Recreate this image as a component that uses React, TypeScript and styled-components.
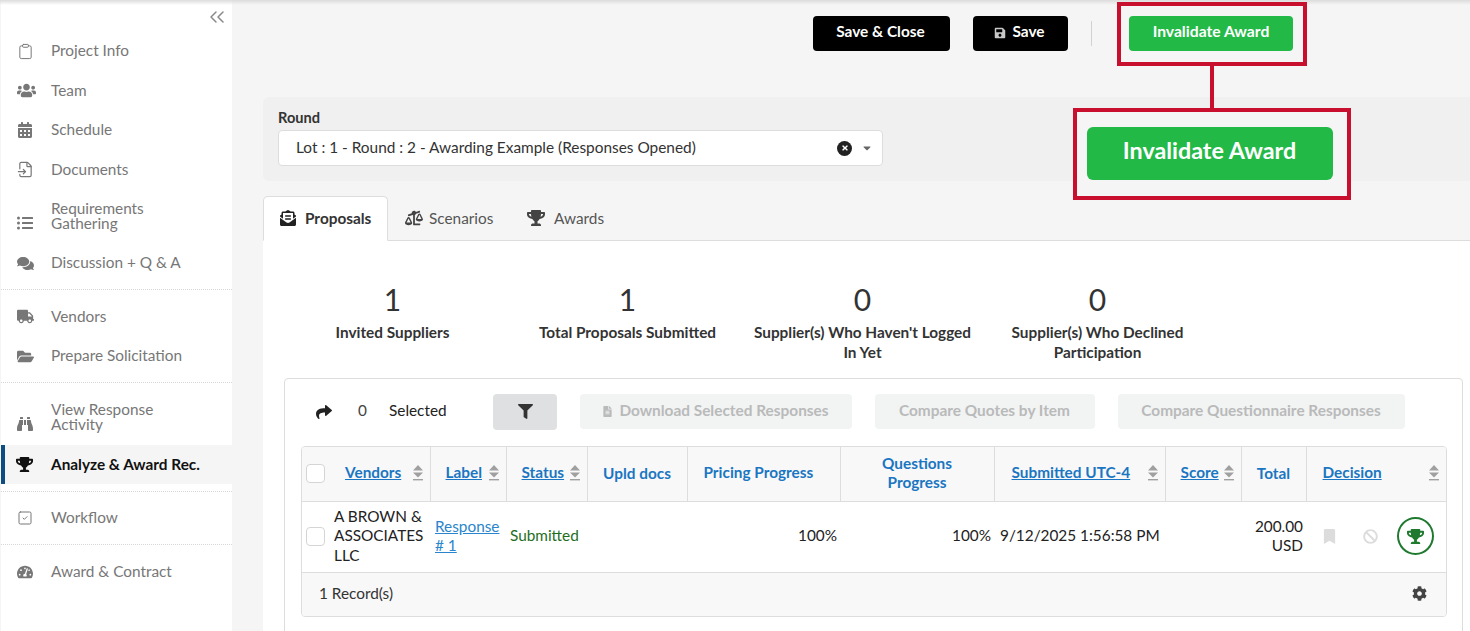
import React from "react";
import styled, { createGlobalStyle } from "styled-components";
import {
  FaUsers, FaCalendarAlt, FaListUl, FaComments, FaTruck, FaFolderOpen,
  FaBinoculars, FaTrophy, FaTachometerAlt, FaSave, FaFilter, FaShare, FaBookmark,
  FaBan, FaCog, FaBalanceScaleLeft, FaEnvelopeOpenText, FaFileAlt, FaCaretDown, FaTimes,
} from "react-icons/fa";
import { ChevronsLeft, FileInput, SquareCheck, Clipboard } from "lucide-react";

const Global = createGlobalStyle`
  html, body { margin: 0; padding: 0; height: 631px; overflow: hidden; background: #f5f5f5; }
  * { box-sizing: border-box; }
  body { font-family: Lato, "Liberation Sans", sans-serif; font-size: 15.35px; color: #222; }
`;

const Page = styled.div`
  position: relative;
  display: flex;
  width: 1470px;
  height: 631px;
  overflow: hidden;
  &::before {
    content: "";
    position: absolute;
    top: 0; left: 0; right: 0;
    height: 5px;
    background: linear-gradient(#dcdcdc, rgba(245, 245, 245, 0));
    z-index: 2;
  }
`;

const Sidebar = styled.nav`
  width: 231px;
  margin-left: 1px;
  flex: none;
  background: #fff;
  padding-top: 31.3px;
  position: relative;
`;

const Collapse = styled.span`
  position: absolute;
  top: 5px;
  right: 3px;
  color: #8a8a8a;
  display: flex;
`;

const Group = styled.div<{ $last?: boolean }>`
  padding-bottom: 6.5px;
  margin-bottom: 6.5px;
  border-bottom: ${p => (p.$last ? "none" : "1px dotted #d8d8d8")};
`;

const Item = styled.div<{ $active?: boolean; $h?: number }>`
  display: flex;
  align-items: center;
  height: ${p => p.$h ?? 39.5}px;
  padding-left: ${p => (p.$active ? "11px" : "16px")};
  border-left: ${p => (p.$active ? "4px solid #0f4c81" : "none")};
  background: ${p => (p.$active ? "#f5f5f5" : "transparent")};
  color: ${p => (p.$active ? "#111" : "#777")};
  font-weight: ${p => (p.$active ? 700 : 400)};
  line-height: 15.6px;
  svg { margin-top: ${p => (p.$h ? "13px" : "0")}; }
`;

const ItemIcon = styled.span<{ $active?: boolean }>`
  width: ${p => (p.$active ? "35px" : "34px")};
  flex: none;
  display: flex;
  font-size: 17px;
`;

const Main = styled.main`
  flex: 1;
  min-width: 0;
  padding-left: 31px;
  display: flex;
  flex-direction: column;
`;

const TopBar = styled.div`
  height: 97px;
  flex: none;
  display: flex;
  align-items: flex-start;
  padding: 16px 177px 0 0;
  justify-content: flex-end;
`;

const DarkButton = styled.button<{ $w: number }>`
  width: ${p => p.$w}px;
  height: 35px;
  margin-right: 23px;
  border: 0;
  border-radius: 4px;
  background: #000;
  color: #fff;
  font: 700 15.4px Lato, sans-serif;
  display: flex;
  align-items: center;
  justify-content: center;
  gap: 6px;
  padding: 0 2px 5px 0;
  svg { color: #c8c8c8; font-size: 12px; margin-top: 3px; }
`;

const Separator = styled.span`
  width: 1px;
  height: 25px;
  margin: 5px 37px 0 0;
  background: #d2d2d2;
`;

const GreenButton = styled.button<{ $big?: boolean }>`
  width: ${p => (p.$big ? "246px" : "164px")};
  height: ${p => (p.$big ? "53px" : "35px")};
  border: 0;
  border-radius: ${p => (p.$big ? "6px" : "4px")};
  background: #22b947;
  color: #fff;
  padding: 0 0 ${p => (p.$big ? "7px" : "5px")};
  font: 700 ${p => (p.$big ? "23.3px" : "15.7px")} Lato, sans-serif;
`;

const RoundPanel = styled.section`
  height: 84px;
  flex: none;
  background: #f0f0f0;
  border-radius: 6px 0 0 6px;
  padding: 12px 15px;
`;

const RoundLabel = styled.div`
  font-weight: 700;
  font-size: 14.6px;
  color: #333;
  line-height: 18px;
  margin: 0 0 3px;
`;

const SelectBox = styled.div`
  width: 605px;
  height: 36px;
  background: #fff;
  border: 1px solid #ddd;
  border-radius: 4px;
  display: flex;
  align-items: center;
  padding: 0 9px 0 17px;
  font-size: 15.4px;
  color: #333;
`;

const SelectText = styled.span`
  flex: 1;
  padding-bottom: 3px;
`;

const ClearDot = styled.span`
  width: 15px;
  height: 15px;
  border-radius: 50%;
  background: #222;
  color: #fff;
  font-size: 8px;
  display: flex;
  align-items: center;
  justify-content: center;
  margin-right: 9px;
`;

const Caret = styled.span`
  display: flex;
  color: #666;
  font-size: 12px;
`;

const Tabs = styled.div`
  display: flex;
  margin-top: 15px;
  height: 45px;
  flex: none;
  border-bottom: 1px solid #ddd;
`;

const Tab = styled.div<{ $active?: boolean; $w: number; $gap: number }>`
  width: ${p => p.$w}px;
  height: 45px;
  display: flex;
  align-items: center;
  gap: ${p => p.$gap}px;
  padding-left: ${p => (p.$active ? "16px" : "17px")};
  padding-bottom: 2px;
  background: ${p => (p.$active ? "#fff" : "transparent")};
  border: ${p => (p.$active ? "1px solid #ddd" : "none")};
  border-bottom: ${p => (p.$active ? "1px solid #fff" : "none")};
  border-radius: 5px 5px 0 0;
  font-weight: ${p => (p.$active ? 700 : 400)};
  color: ${p => (p.$active ? "#333" : "#555")};
  svg { font-size: ${p => (p.$active ? "16px" : "18px")}; color: ${p => (p.$active ? "#222" : "#444")}; }
`;

const TabBody = styled.div`
  flex: 1;
  background: #fff;
  padding: 0 7px 0 21px;
`;

const Stats = styled.div`
  display: grid;
  grid-template-columns: repeat(4, 235px);
  margin-left: -9px;
  height: 137px;
  padding-top: 40px;
  text-align: center;
`;

const Stat = styled.div`
  padding: 0 5px;
`;

const StatValue = styled.div`
  font-size: 30px;
  line-height: 36px;
  color: #333;
`;

const StatLabel = styled.div`
  font-weight: 700;
  color: #333;
  line-height: 20px;
  margin-top: 5px;
`;

const Card = styled.div`
  border: 1px solid #ddd;
  border-radius: 4px;
  padding: 14px 15px 40px 16px;
`;

const Toolbar = styled.div`
  display: flex;
  align-items: center;
  height: 37px;
  margin-bottom: 16px;
`;

const ShareIcon = styled.span`
  display: flex;
  margin-left: 15px;
  font-size: 16px;
  color: #222;
  width: 42px;
`;

const Count = styled.span`
  width: 31px;
  color: #444;
  padding-bottom: 3px;
`;

const Selected = styled.span`
  width: 104px;
  padding-bottom: 3px;
`;

const FilterButton = styled.button`
  width: 64px;
  height: 36px;
  border: 0;
  border-radius: 4px;
  background: #dfe0e1;
  color: #333;
  font-size: 15px;
  display: flex;
  align-items: center;
  justify-content: center;
  margin-right: 23px;
`;

const DisabledButton = styled.button<{ $w: number }>`
  width: ${p => p.$w}px;
  height: 35px;
  border: 0;
  border-radius: 4px;
  background: #f2f3f3;
  color: #b9baba;
  font: 700 15.4px Lato, sans-serif;
  margin-right: 23px;
  padding: 0 1px 3px 0;
  display: flex;
  align-items: center;
  justify-content: center;
  gap: 6px;
  svg { font-size: 11px; margin-top: 3px; }
`;

const TableWrap = styled.div`
  border: 1px solid #ddd;
  border-radius: 4px;
  width: 1146px;
  overflow: hidden;
`;

const Grid = styled.table`
  width: 1144px;
  table-layout: fixed;
  border-collapse: collapse;
`;

const Head = styled.th`
  height: 54px;
  background: #f8f8f8;
  border-right: 1px solid #ddd;
  border-bottom: 1px solid #ddd;
  padding: 0 4px 1px;
  font-weight: 700;
  color: #1a76c2;
  line-height: 19.5px;
  &:last-child { border-right: 0; }
`;

const HeadInner = styled.div<{ $pad?: number }>`
  display: flex;
  align-items: center;
  justify-content: space-between;
  padding: 0 2px 1px ${p => p.$pad ?? 0}px;
`;

const SortLink = styled.a`
  flex: 1;
  text-align: left;
  color: #1a76c2;
  text-decoration: underline;
`;

const HeadBox = styled.span`
  display: flex;
  margin-right: 20px;
  margin-top: 2px;
`;

const CheckBox = styled.span`
  display: inline-block;
  flex: none;
  width: 19px;
  height: 19px;
  background: #fff;
  border: 1px solid #d5d5d5;
  border-radius: 4px;
`;

const Cell = styled.td<{ $align?: string; $left?: number }>`
  height: 71px;
  padding: 0 ${p => (p.$align === "right" ? 3 : 4)}px 1px ${p => p.$left ?? 4}px;
  border-bottom: 1px solid #ddd;
  line-height: 19.5px;
  text-align: ${p => p.$align ?? "left"};
  color: #222;
`;

const VendorCell = styled.div`
  display: flex;
  align-items: center;
  gap: 9px;
`;

const ResponseLink = styled.a`
  color: #2a85cc;
  text-decoration: underline;
  display: block;
  line-height: 19.5px;
`;

const StatusText = styled.span`
  color: #1e6e1e;
`;

const Decision = styled.div`
  display: flex;
  align-items: center;
  padding-left: 12px;
`;

const DecisionIcon = styled.span<{ $w: number }>`
  width: ${p => p.$w}px;
  display: flex;
  color: #dcdcdc;
  font-size: 15px;
`;

const TrophyCircle = styled.span`
  width: 37px;
  height: 38px;
  border: 2px solid #1f7a30;
  border-radius: 50%;
  color: #1f7a30;
  display: flex;
  align-items: center;
  justify-content: center;
  font-size: 17px;
  flex: none;
`;

const Footer = styled.div`
  height: 43px;
  background: #f8f8f8;
  display: flex;
  align-items: center;
  justify-content: space-between;
  padding: 0 19px 2px 17px;
  color: #333;
  svg { color: #444; font-size: 15px; display: block; }
`;

const CalloutSmall = styled.div`
  position: absolute;
  left: 1117px;
  top: 2px;
  width: 190px;
  height: 64px;
  border: 4px solid #c8102e;
  z-index: 3;
`;

const CalloutLine = styled.div`
  position: absolute;
  left: 1210px;
  top: 66px;
  width: 4px;
  height: 42px;
  background: #c8102e;
  z-index: 3;
`;

const CalloutBig = styled.div`
  position: absolute;
  left: 1073px;
  top: 108px;
  width: 278px;
  height: 92px;
  border: 4px solid #c8102e;
  background: #f5f5f5;
  display: flex;
  align-items: flex-start;
  justify-content: center;
  padding: 15px 5px 0 0;
  z-index: 3;
`;

const SortGlyph = () => (
  <svg width="12" height="18" viewBox="0 0 12 18" style={{ flex: "none" }}>
    <path d="M6 1 L11 6.5 H1 Z M1 8.5 H11 L6 13.5 Z" fill="#a0a0a0" />
    <rect x="1" y="15" width="10" height="1.4" fill="#a0a0a0" />
  </svg>
);

const nav: any[] = [
  { items: [
    { icon: <Clipboard size={17} strokeWidth={1.4} />, label: "Project Info" },
    { icon: <FaUsers size={19} />, label: "Team" },
    { icon: <FaCalendarAlt size={16} />, label: "Schedule" },
    { icon: <FileInput size={17} strokeWidth={1.7} />, label: "Documents" },
    { icon: <FaListUl size={16} />, label: <>Requirements<br />Gathering</>, h: 54 },
    { icon: <FaComments />, label: "Discussion + Q & A" },
  ] },
  { items: [
    { icon: <FaTruck />, label: "Vendors" },
    { icon: <FaFolderOpen />, label: "Prepare Solicitation" },
  ] },
  { items: [
    { icon: <FaBinoculars size={16} />, label: <>View Response<br />Activity</>, h: 55 },
    { icon: <FaTrophy />, label: "Analyze & Award Rec.", active: true },
  ] },
  { items: [{ icon: <SquareCheck size={16} strokeWidth={1.5} />, label: "Workflow" }] },
  { items: [{ icon: <FaTachometerAlt size={16} />, label: "Award & Contract" }], last: true },
];

const stats = [
  { v: "1", l: "Invited Suppliers" },
  { v: "1", l: "Total Proposals Submitted" },
  { v: "0", l: "Supplier(s) Who Haven't Logged In Yet" },
  { v: "0", l: "Supplier(s) Who Declined Participation" },
];

export default function App() {
  return (
    <Page>
      <Global />
      <Sidebar>
        <Collapse><ChevronsLeft size={24} strokeWidth={1.5} /></Collapse>
        {nav.map((g, i) => (
          <Group key={i} $last={g.last}>
            {g.items.map((it: any, j: number) => (
              <Item key={j} $active={it.active} $h={it.h}>
                <ItemIcon $active={it.active}>{it.icon}</ItemIcon>
                <span>{it.label}</span>
              </Item>
            ))}
          </Group>
        ))}
      </Sidebar>
      <Main>
        <TopBar>
          <DarkButton $w={137}>Save &amp; Close</DarkButton>
          <DarkButton $w={95}><FaSave />Save</DarkButton>
          <Separator />
          <GreenButton>Invalidate Award</GreenButton>
        </TopBar>
        <RoundPanel>
          <RoundLabel>Round</RoundLabel>
          <SelectBox>
            <SelectText>Lot : 1 - Round : 2 - Awarding Example (Responses Opened)</SelectText>
            <ClearDot><FaTimes /></ClearDot>
            <Caret><FaCaretDown /></Caret>
          </SelectBox>
        </RoundPanel>
        <Tabs>
          <Tab $active $w={125} $gap={9}><FaEnvelopeOpenText />Proposals</Tab>
          <Tab $w={122} $gap={6}><FaBalanceScaleLeft />Scenarios</Tab>
          <Tab $w={110} $gap={9}><FaTrophy />Awards</Tab>
        </Tabs>
        <TabBody>
          <Stats>
            {stats.map(s => (
              <Stat key={s.l}>
                <StatValue>{s.v}</StatValue>
                <StatLabel>{s.l}</StatLabel>
              </Stat>
            ))}
          </Stats>
          <Card>
            <Toolbar>
              <ShareIcon><FaShare /></ShareIcon>
              <Count>0</Count>
              <Selected>Selected</Selected>
              <FilterButton><FaFilter /></FilterButton>
              <DisabledButton $w={272}><FaFileAlt />Download Selected Responses</DisabledButton>
              <DisabledButton $w={220}>Compare Quotes by Item</DisabledButton>
              <DisabledButton $w={287}>Compare Questionnaire Responses</DisabledButton>
            </Toolbar>
            <TableWrap>
              <Grid>
                <colgroup>
                  <col style={{ width: 128 }} />
                  <col style={{ width: 76 }} />
                  <col style={{ width: 81 }} />
                  <col style={{ width: 100 }} />
                  <col style={{ width: 153 }} />
                  <col style={{ width: 154 }} />
                  <col style={{ width: 171 }} />
                  <col style={{ width: 76 }} />
                  <col style={{ width: 65 }} />
                  <col style={{ width: 140 }} />
                </colgroup>
                <thead>
                  <tr>
                    <Head><HeadInner><HeadBox><CheckBox /></HeadBox><SortLink>Vendors</SortLink><SortGlyph /></HeadInner></Head>
                    <Head><HeadInner $pad={11}><SortLink>Label</SortLink><SortGlyph /></HeadInner></Head>
                    <Head><HeadInner $pad={11}><SortLink>Status</SortLink><SortGlyph /></HeadInner></Head>
                    <Head>Upld docs</Head>
                    <Head><HeadInner $pad={12}><span>Pricing Progress</span></HeadInner></Head>
                    <Head>Questions<br />Progress</Head>
                    <Head><HeadInner $pad={13}><SortLink>Submitted UTC-4</SortLink><SortGlyph /></HeadInner></Head>
                    <Head><HeadInner $pad={11}><SortLink>Score</SortLink><SortGlyph /></HeadInner></Head>
                    <Head>Total</Head>
                    <Head><HeadInner $pad={12}><SortLink>Decision</SortLink><SortGlyph /></HeadInner></Head>
                  </tr>
                </thead>
                <tbody>
                  <tr>
                    <Cell><VendorCell><CheckBox /><span>A BROWN &amp; ASSOCIATES LLC</span></VendorCell></Cell>
                    <Cell $left={5}><ResponseLink>Response # 1</ResponseLink></Cell>
                    <Cell><StatusText>Submitted</StatusText></Cell>
                    <Cell />
                    <Cell $align="right">100%</Cell>
                    <Cell $align="right">100%</Cell>
                    <Cell $left={6}>9/12/2025 1:56:58 PM</Cell>
                    <Cell />
                    <Cell $align="right">200.00 USD</Cell>
                    <Cell>
                      <Decision>
                        <DecisionIcon $w={41}><FaBookmark /></DecisionIcon>
                        <DecisionIcon $w={34}><FaBan /></DecisionIcon>
                        <TrophyCircle><FaTrophy /></TrophyCircle>
                      </Decision>
                    </Cell>
                  </tr>
                </tbody>
              </Grid>
              <Footer>
                <span>1 Record(s)</span>
                <FaCog />
              </Footer>
            </TableWrap>
          </Card>
        </TabBody>
      </Main>
      <CalloutSmall />
      <CalloutLine />
      <CalloutBig><GreenButton $big>Invalidate Award</GreenButton></CalloutBig>
    </Page>
  );
}
